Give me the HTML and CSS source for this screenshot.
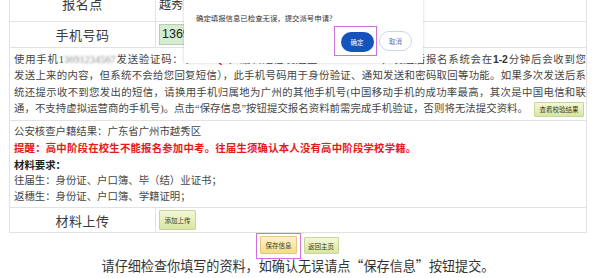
FILE: index.html
```html
<!DOCTYPE html>
<html lang="zh-CN">
<head>
<meta charset="utf-8">
<title>报名信息确认</title>
<link rel="stylesheet" href="styles.css">
</head>
<body>
<div class="page">
  <table class="form">
    <tr class="r1">
      <td class="label">报名点</td>
      <td class="value"><span class="plain">越秀区报名点</span></td>
    </tr>
    <tr class="r2">
      <td class="label">手机号码</td>
      <td class="value"><span class="input">13691234567</span></td>
    </tr>
    <tr class="r3">
      <td class="note" colspan="2">
        <div class="ln j">使用手机1<span class="blur">3691234567</span>发送验证码：<span class="red">（6BK2Q9）</span>编辑短信发送至106907001234，发送后报名系统会在<b class="num">1-2</b>分钟后会收到您</div>
        <div class="ln j">发送上来的内容，但系统不会给您回复短信），此手机号码用于身份验证、通知发送和密码取回等功能。如果多次发送后系</div>
        <div class="ln j">统还提示收不到您发出的短信，请换用手机归属地为广州的其他手机号(中国移动手机的成功率最高，其次是中国电信和联</div>
        <div class="ln l4">通，不支持虚拟运营商的手机号)。点击“保存信息”按钮提交报名资料前需完成手机验证，否则将无法提交资料。<span class="btn btn-check">查看校验结果</span></div>
      </td>
    </tr>
    <tr class="r4">
      <td class="note" colspan="2">
        <div class="ln">公安核查户籍结果：广东省广州市越秀区</div>
        <div class="ln warn">提醒：高中阶段在校生不能报名参加中考。往届生须确认本人没有高中阶段学校学籍。</div>
        <div class="ln strong">材料要求：</div>
        <div class="ln">往届生：身份证、户口簿、毕（结）业证书；</div>
        <div class="ln">返穗生：身份证、户口簿、学籍证明；</div>
      </td>
    </tr>
    <tr class="r5">
      <td class="label">材料上传</td>
      <td class="value"><span class="btn btn-upload">添加上传</span></td>
    </tr>
  </table>

  <div class="actions">
    <span class="mark mark-save"><span class="btn btn-save">保存信息</span></span>
    <span class="btn btn-home">返回主页</span>
  </div>
  <p class="tip">请仔细检查你填写的资料，如确认无误请点“保存信息”按钮提交。</p>
</div>

<div class="dialog">
  <p class="dialog-msg">确定填报信息已检查无误，提交派号申请?</p>
  <div class="dialog-btns">
    <span class="mark mark-ok"><span class="dbtn dbtn-ok">确定</span></span>
    <span class="dbtn dbtn-cancel">取消</span>
  </div>
</div>
</body>
</html>
```

FILE: styles.css
```css
html, body {
  margin: 0;
  padding: 0;
  height: 100%;
  overflow: hidden;
  background: #fff;
}
body {
  font-family: "Liberation Serif", "Noto Sans CJK SC", serif;
  color: #454545;
  position: relative;
}
.page {
  padding: 0 14px 0 9px;
}
.form {
  width: 100%;
  border-collapse: collapse;
  margin-top: -15px;
  table-layout: fixed;
}
.form td {
  border: 1px solid #e2e2e2;
  padding: 0;
  vertical-align: middle;
}
.form td.label {
  width: 145px;
  text-align: center;
  font-family: "Noto Sans CJK SC", sans-serif;
  font-size: 13px;
  color: #3a3a3a;
  letter-spacing: 0.5px;
}
.form td.value {
  padding-left: 3px;
}
.r1 { height: 36px; }
.r2 { height: 26px; }
.r3 { height: 72px; }
.r4 { height: 86px; }
.r5 { height: 25px; }

.plain {
  font-family: "Noto Sans CJK SC", sans-serif;
  font-size: 12px;
  color: #333;
}
.input {
  display: inline-block;
  width: 160px;
  height: 19px;
  line-height: 19px;
  padding-left: 2px;
  background: #d6ecd1;
  border: 1px solid #b6cfb1;
  font-family: "Liberation Sans", sans-serif;
  font-size: 12.5px;
  color: #222;
  vertical-align: middle;
}

.form td.note {
  padding: 4px 0 3px 4px;
  font-size: 10.4px;
}
.r4 td.note {
  padding: 3px 0 2px 4px;
}
.ln {
  line-height: 16.3px;
  height: 16.3px;
  white-space: nowrap;
}
.r4 .ln {
  line-height: 16.2px;
  height: 16.2px;
}
.j {
  white-space: normal;
  text-align: justify;
  text-align-last: justify;
}
.l4 {
  letter-spacing: 0.05px;
}
.blur {
  color: #888;
  filter: blur(1.2px);
}
.red {
  color: #e0201f;
  font-weight: bold;
}
.num {
  font-family: "Liberation Sans", sans-serif;
  font-weight: bold;
  color: #333;
}
.warn {
  color: #e8181c;
  font-weight: bold;
  font-family: "Noto Sans CJK SC", sans-serif;
  letter-spacing: 0.2px;
}
.strong {
  font-weight: bold;
  color: #222;
  font-family: "Noto Sans CJK SC", sans-serif;
}

.btn {
  display: inline-flex;
  align-items: center;
  justify-content: center;
  box-sizing: border-box;
  font-family: "Noto Sans CJK SC", sans-serif;
  font-size: 6.5px;
  letter-spacing: 0;
  color: #3a3a2a;
  background: linear-gradient(#f4f8d6, #d7e6a3);
  border: 1px solid #c9d69a;
  border-radius: 1px;
  vertical-align: middle;
}
.btn-check {
  width: 50px;
  height: 15px;
  margin-left: 6px;
}
.btn-upload {
  width: 37px;
  height: 20px;
}
.btn-save {
  width: 37px;
  height: 18px;
  background: linear-gradient(#fff3c8, #f4dc8c);
  border-color: #e0c97c;
}
.btn-home {
  width: 35px;
  height: 17px;
  margin-top: 4px;
}

.mark {
  display: inline-flex;
  border: 1.5px solid #cf73dc;
}
.mark-save {
  padding: 1.5px 2.5px 4px 3.5px;
}

.actions {
  display: flex;
  justify-content: center;
  align-items: flex-start;
  gap: 3px;
  padding-right: 2px;
}
.tip {
  margin: 0;
  text-align: center;
  font-family: "Noto Sans CJK SC", sans-serif;
  font-size: 13.1px;
  line-height: 14px;
  color: #333;
  padding-right: 0;
}

.dialog {
  position: absolute;
  left: 184px;
  top: -10px;
  width: 239px;
  height: 73px;
  box-sizing: border-box;
  padding: 23px 11px 0 12px;
  background: #fff;
  box-shadow: 0 0 3px rgba(0, 0, 0, 0.18);
}
.dialog-msg {
  margin: 0;
  font-family: "Noto Sans CJK SC", sans-serif;
  font-size: 7.4px;
  line-height: 10px;
  color: #333;
}
.dialog-btns {
  display: flex;
  justify-content: flex-end;
  align-items: center;
  gap: 2px;
  margin-top: 3px;
}
.mark-ok {
  padding: 4.5px 2.5px 3.5px 5.5px;
}
.dbtn {
  display: inline-flex;
  align-items: center;
  justify-content: center;
  box-sizing: border-box;
  width: 33px;
  height: 20px;
  border-radius: 10px;
  font-family: "Noto Sans CJK SC", sans-serif;
  font-size: 6.5px;
}
.dbtn-ok {
  background: #1553bd;
  color: #fff;
}
.dbtn-cancel {
  background: #fff;
  color: #5b78b3;
  border: 1px solid #c9d5ec;
}
```
